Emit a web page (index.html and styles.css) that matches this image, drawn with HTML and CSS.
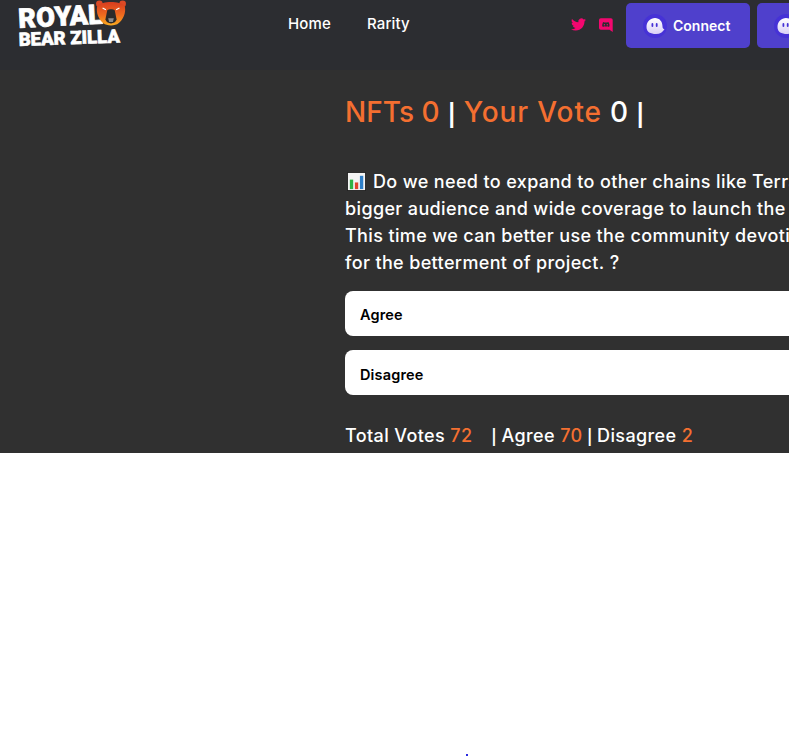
FILE: index.html
```html
<!DOCTYPE html>
<html lang="en">
<head>
<meta charset="utf-8">
<title>Royal Bear Zilla</title>
<link rel="stylesheet" href="styles.css">
</head>
<body>
<div class="hero">
  <header class="topbar">
    <a class="logo">
      <span class="logo-royal">ROYAL</span>
      <span class="logo-bear">BEAR ZILLA</span>
      <svg class="logo-face" viewBox="0 0 32 30">
        <defs><linearGradient id="fur" x1="0" y1="0" x2="0" y2="1"><stop offset="0" stop-color="#d63c1f"/><stop offset=".55" stop-color="#ee6a1f"/><stop offset="1" stop-color="#fbab1f"/></linearGradient></defs>
        <circle cx="3.500" cy="4" r="3.500" fill="#dc4a26"/>
        <circle cx="28.500" cy="4" r="3.500" fill="#dc4a26"/>
        <path d="M1.500 6C7 1 25 1 30.500 6C32.500 12 30 20 24 25C21 28 11 28 8 25C2 20 -.5 12 1.500 6Z" fill="url(#fur)"/>
        <path d="M12 11C14 9.500 18 9.500 20 11L22 21C20 26.500 12 26.500 10 21Z" fill="#2a2a2a"/>
        <path d="M13 19.500H19L18 23.500H14Z" fill="#8c8c8c"/>
        <path d="M7 8.500L10.500 10.500M25 8.500L21.500 10.500" stroke="#fff" stroke-width="1.300"/>
      </svg>
    </a>
    <nav class="nav">
      <a>Home</a>
      <a>Rarity</a>
    </nav>
    <div class="actions">
      <svg class="social twitter" viewBox="0 0 24 24"><path d="M23.950 4.570a10 10 0 0 1-2.820.77 4.960 4.960 0 0 0 2.160-2.720c-.95.550-2 .96-3.130 1.190a4.920 4.920 0 0 0-8.380 4.480C7.690 8.090 4.070 6.130 1.640 3.160a4.820 4.820 0 0 0-.67 2.480c0 1.710.87 3.210 2.190 4.100a4.900 4.900 0 0 1-2.230-.62v.06a4.920 4.920 0 0 0 3.950 4.830 5 5 0 0 1-2.210.08 4.940 4.940 0 0 0 4.600 3.420A9.870 9.870 0 0 1 0 19.540a14 14 0 0 0 7.560 2.210c9.050 0 14-7.500 14-13.980 0-.21 0-.42-.02-.63a9.940 9.940 0 0 0 2.460-2.550z"/></svg>
      <svg class="social discord" viewBox="0 0 24 24"><path fill-rule="evenodd" d="M3 .5H20.500A3 3 0 0 1 23.500 3.500V24L18 20H3A3 3 0 0 1 0 17V3.500A3 3 0 0 1 3 .5ZM8.500 7C7.500 7.300 7 7.600 6.500 8 5.700 10 5.400 12 5.500 14 6.400 14.700 7.300 15.100 8 15.200L8.800 14C10.500 14.500 13 14.500 14.700 14L15.500 15.200C16.200 15.100 17.100 14.700 18 14 18.100 12 17.800 10 17 8 16.500 7.600 16 7.300 15 7L14.600 7.800C13 7.500 10.500 7.500 8.900 7.800ZM9.300 10.300A1.200 1.300 0 1 1 9.300 12.900 1.200 1.300 0 1 1 9.300 10.300ZM14.200 10.300A1.200 1.300 0 1 1 14.200 12.900 1.200 1.300 0 1 1 14.200 10.300Z"/></svg>
      <button class="connect">
        <svg class="ghost" viewBox="0 0 24 24"><defs><linearGradient id="gh" x1="0" y1="0" x2="0" y2="1"><stop offset="0" stop-color="#fff"/><stop offset="1" stop-color="#d9d0f6"/></linearGradient></defs><circle cx="12" cy="12" r="12" fill="#4632d6"/><path d="M3.500 13C3.500 7.500 7.500 4 12 4S19.500 7.500 19.500 12.500C19.500 14.500 20.500 15 21.500 15 20 18 17 20 13 20 7.500 20 3.500 18 3.500 13Z" fill="url(#gh)"/><rect x="8.500" y="9" width="1.800" height="4" rx=".9" fill="#4632d6"/><rect x="12.800" y="9" width="1.800" height="4" rx=".9" fill="#4632d6"/></svg>
        <span>Connect</span>
      </button>
      <button class="connect">
        <svg class="ghost" viewBox="0 0 24 24"><circle cx="12" cy="12" r="12" fill="#4632d6"/><path d="M3.500 13C3.500 7.500 7.500 4 12 4S19.500 7.500 19.500 12.500C19.500 14.500 20.500 15 21.500 15 20 18 17 20 13 20 7.500 20 3.500 18 3.500 13Z" fill="url(#gh)"/><rect x="8.500" y="9" width="1.800" height="4" rx=".9" fill="#4632d6"/><rect x="12.800" y="9" width="1.800" height="4" rx=".9" fill="#4632d6"/></svg>
        <span>Connect</span>
      </button>
    </div>
  </header>
  <main class="vote">
    <h2 class="tally"><span class="accent">NFTs 0</span><span class="bar">|</span><span class="accent wide">Your Vote</span><span class="count">0</span><span class="bar">|</span></h2>
    <p class="question">
      <svg class="chart" viewBox="0 0 20 20"><rect width="20" height="20" fill="#222"/><rect x="1" y="1" width="18" height="18" fill="#f4f4f4"/><rect x="3" y="8" width="3.500" height="10" fill="#2fb344"/><rect x="8.300" y="11" width="3.500" height="7" fill="#e0452c"/><rect x="13.600" y="4" width="3.500" height="14" fill="#2d7fc9"/></svg>Do we need to expand to other chains like Terra to reach a<br>bigger audience and wide coverage to launch the project?<br>This time we can better use the community devotion<br>for the betterment of project. ?
    </p>
    <button class="option">Agree</button>
    <button class="option">Disagree</button>
    <p class="totals">Total Votes <span class="accent">72</span><span class="spacer"></span><span class="pipe">|</span>Agree <span class="accent">70</span><span class="pipe">|</span>Disagree <span class="accent">2</span></p>
  </main>
</div>
<div class="below"><i class="dot"></i></div>
</body>
</html>
```
FILE: styles.css
```css
* { box-sizing: border-box; }
html, body { margin: 0; height: 756px; overflow: hidden; background: #fff; }
body { font-family: "Inter", "Liberation Sans", sans-serif; width: 789px; }
.hero { height: 453px; background: #303030; overflow: hidden; }
.topbar { height: 70px; background: #2c2d31; display: flex; align-items: flex-start; width: 940px; }
.logo { position: relative; display: flex; flex-direction: column; width: 268px; padding: 7px 0 0 19px; color: #fff; font-family: "Roboto", sans-serif; font-weight: 900; }
.logo-royal { font-size: 27px; line-height: 24px; letter-spacing: .2px; transform: rotate(-3deg); transform-origin: left bottom; -webkit-text-stroke: .8px #fff; }
.logo-bear { font-size: 18.500px; line-height: 18px; letter-spacing: 0; transform: rotate(-2deg); transform-origin: left bottom; -webkit-text-stroke: .6px #fff; white-space: nowrap; }
.logo-face { position: absolute; left: 96px; top: 0; width: 30px; height: 28px; }
.nav { display: flex; gap: 36px; padding-top: 14px; width: 303px; padding-left: 20px; }
.nav a { color: #fff; font-size: 15px; font-weight: 500; line-height: 20px; letter-spacing: .15px; }
.actions { display: flex; align-items: flex-start; padding-top: 3px; }
.social { fill: #f3076f; flex: none; }
.twitter { width: 15px; height: 15px; margin: 14px 13px 0 0; }
.discord { width: 14px; height: 16px; margin: 14px 13px 0 0; }
.connect { display: flex; align-items: center; gap: 6px; width: 124px; height: 45px; margin-right: 7px; padding: 0 0 0 17px; border: 0; border-radius: 5px; background: #4f40cc; color: #fff; font: 600 14px/20px "Inter", sans-serif; flex: none; }
.ghost { width: 24px; height: 24px; flex: none; }
.vote { padding: 22px 0 0 345px; color: #fff; width: 940px; }
.tally { margin: 0; font-size: 28px; line-height: 40px; font-weight: 500; white-space: nowrap; }
.wide { letter-spacing: .9px; }
.count { margin-left: 8px; }
.bar { font-family: "Open Sans", sans-serif; font-weight: 700; font-size: 27px; margin: 0 4.700px; }
.accent { color: #f46f30; }
.question { margin: 36px 0 0; font-size: 18px; line-height: 27px; font-weight: 550; white-space: nowrap; letter-spacing: .36px; }
.chart { width: 19px; height: 19px; vertical-align: -3px; margin: 0 7px 0 2px; }
.option { display: block; width: 600px; height: 45px; margin: 0 0 14px; padding: 2px 15px 0; border: 0; border-radius: 8px; background: #fff; color: #000; text-align: left; font: 600 14.500px/20px "Inter", sans-serif; letter-spacing: .15px; }
.question + .option { margin-top: 15px; }
.option + .option { padding-top: 5px; }
.totals { margin: 27px 0 0; font-size: 18px; line-height: 27px; font-weight: 550; white-space: nowrap; letter-spacing: .38px; }
.pipe { font-family: "Open Sans", sans-serif; font-weight: 700; font-size: 17px; margin: 0 2.400px; }
.spacer { display: inline-block; width: 14.600px; }
.below { height: 303px; position: relative; }
.dot { position: absolute; left: 466px; top: 301px; width: 2px; height: 2px; background: #2a2ae0; }
```
